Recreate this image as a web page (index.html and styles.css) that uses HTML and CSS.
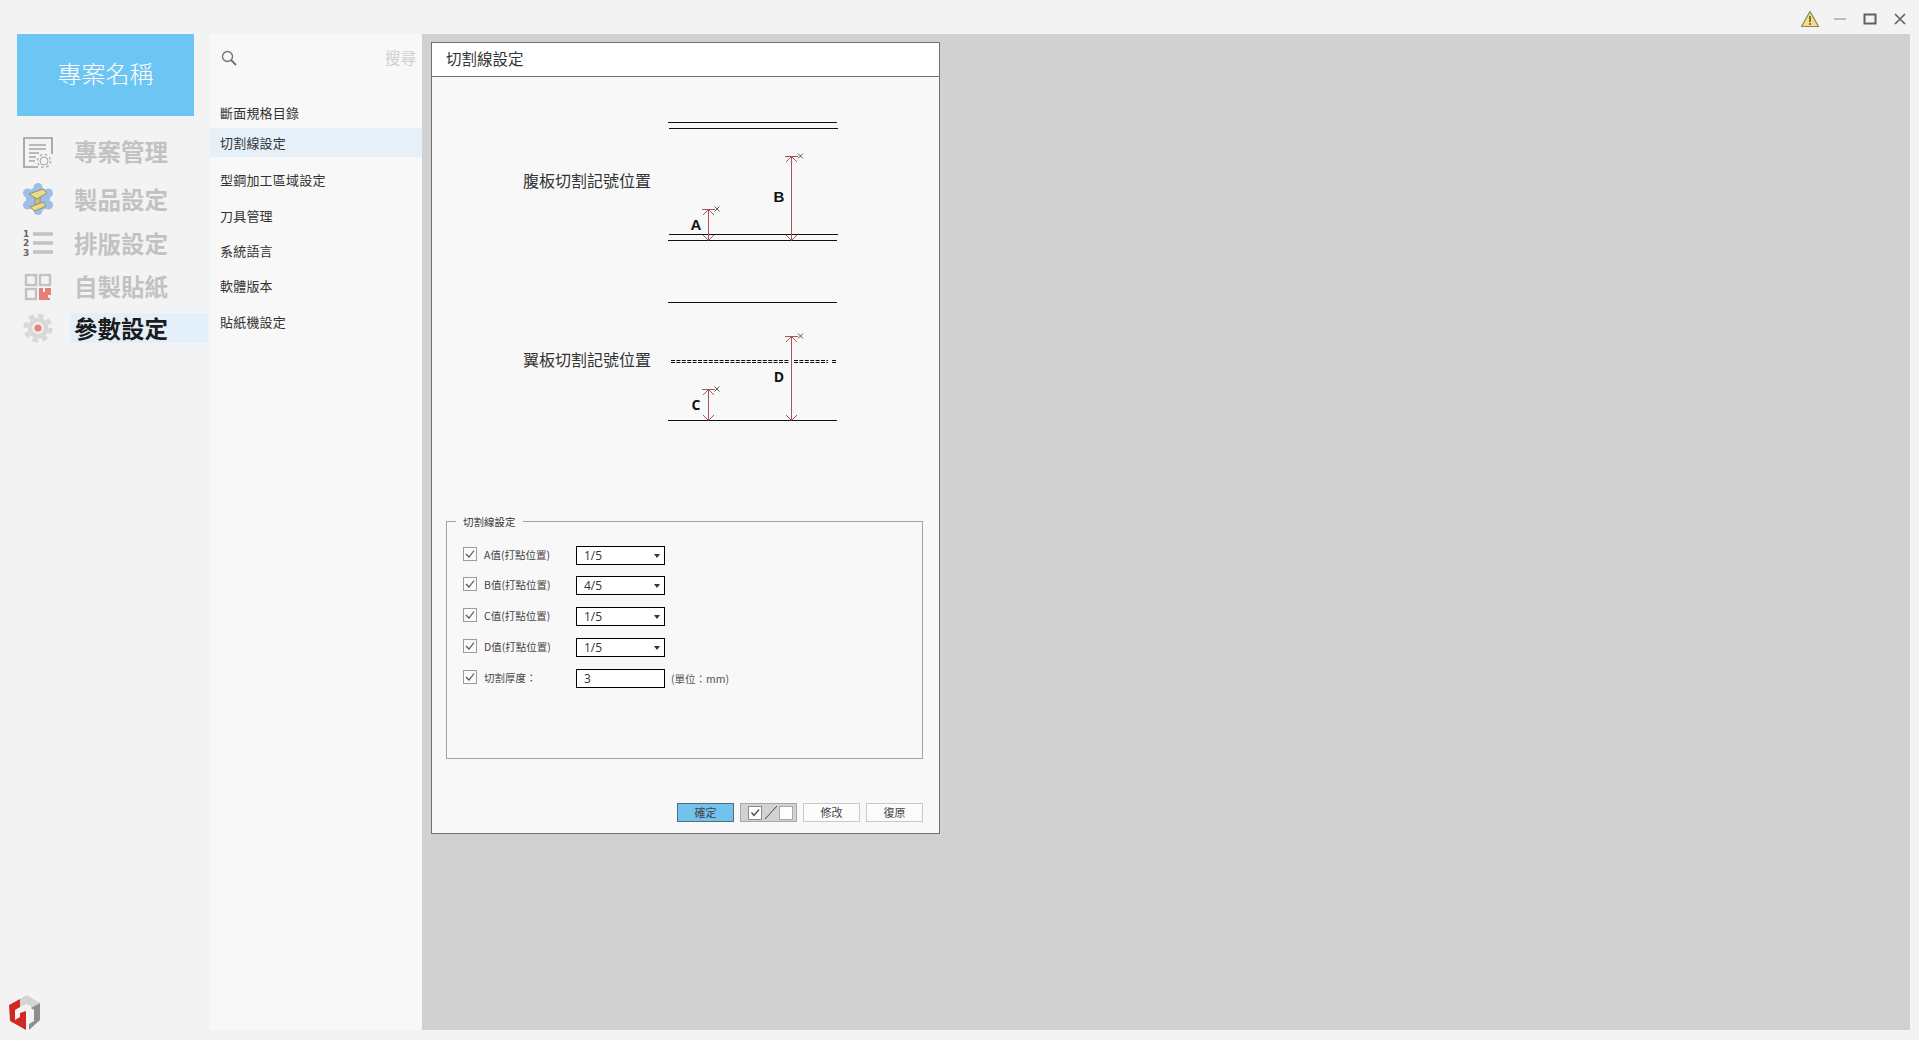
FILE: index.html
```html
<!DOCTYPE html>
<html>
<head>
    <title>切割線設定</title>
    <meta charset="UTF-8">
    <link rel="stylesheet" href="styles.css">
</head>
<body>
    <header class="title-bar">
        <svg class="warning-icon" width="20" height="18" viewBox="0 0 20 18">
            <path d="M10 1.5 L18.5 16.5 H1.5 Z" fill="#f5dc8c" stroke="#8a8358" stroke-width="1.2" stroke-linejoin="round"/>
            <path d="M10 6 V12" stroke="#7a6a30" stroke-width="1.8"/>
            <path d="M10 13 V15" stroke="#7a6a30" stroke-width="1.8"/>
        </svg>
        <div class="win-button"><svg width="14" height="14" viewBox="0 0 14 14"><path d="M1 7 H13" stroke="#adadad" stroke-width="1.5"/></svg></div>
        <div class="win-button"><svg width="14" height="14" viewBox="0 0 14 14"><rect x="1.5" y="2.5" width="11" height="9" fill="none" stroke="#606060" stroke-width="2"/></svg></div>
        <div class="win-button"><svg width="14" height="14" viewBox="0 0 14 14"><path d="M2 2 L12 12 M12 2 L2 12" stroke="#606060" stroke-width="1.6"/></svg></div>
    </header>
    <main>
        <div class="sidebar">
            <div class="project-name">專案名稱</div>
            <div class="menu-element menu-first">
                <svg class="menu-icon" width="30" height="32" viewBox="0 0 30 32">
                    <path d="M29 17 V1 H1 V30 H15" fill="none" stroke="#9a9a9a" stroke-width="1.6"/>
                    <path d="M6 8 H23 M6 12 H23 M6 16 H16 M6 20 H13 M6 24 H12" stroke="#a5a5a5" stroke-width="1.3"/>
                    <circle cx="21" cy="24" r="4" fill="none" stroke="#a5a5a5" stroke-width="1"/>
                    <circle cx="21" cy="24" r="6.5" fill="none" stroke="#b5b5b5" stroke-width="1.6" stroke-dasharray="2.5 2.6"/>
                </svg>
                <span class="menu-text-up">專案管理</span>
            </div>
            <div class="menu-element menu-second">
                <svg class="menu-icon" width="30" height="32" viewBox="0 0 30 32">
                    <g fill="#9dbfe6">
                        <circle cx="15" cy="4.5" r="4.5"/><circle cx="15" cy="27.5" r="4.5"/>
                        <circle cx="4.5" cy="10" r="4.5"/><circle cx="25.500" cy="10" r="4.5"/>
                        <circle cx="4.5" cy="22" r="4.5"/><circle cx="25.500" cy="22" r="4.5"/>
                        <circle cx="15" cy="16" r="12"/>
                    </g>
                    <path d="M12 14 L17 12 L17 21 L12 24 Z" fill="#cfc07a" stroke="#8f8a5c" stroke-width="0.8"/>
                    <path d="M6 11 L20 6 L24 10 L14 16 Z" fill="#ecd98c" stroke="#8f8a5c" stroke-width="0.9"/>
                    <path d="M7 24 L20 19 L23 23 L12 28 Z" fill="#ecd98c" stroke="#8f8a5c" stroke-width="0.9"/>
                </svg>
                <span>製品設定</span>
            </div>
            <div class="menu-element menu-third">
                <svg class="menu-icon" width="30" height="28" viewBox="0 0 30 28">
                    <text class="list-digit" x="0" y="8">1</text>
                    <text class="list-digit" x="0" y="17">2</text>
                    <text class="list-digit" x="0" y="27">3</text>
                    <path d="M10 5 H30 M10 14 H30 M10 23 H30" stroke="#c2c2c2" stroke-width="3.4"/>
                </svg>
                <span>排版設定</span>
            </div>
            <div class="menu-element menu-fourth">
                <svg class="menu-icon" width="30" height="28" viewBox="0 0 30 28">
                    <g fill="none" stroke="#c2c2c2" stroke-width="2.4">
                        <rect x="3" y="2" width="10" height="10"/>
                        <rect x="17" y="2" width="10" height="10"/>
                        <rect x="3" y="16" width="10" height="10"/>
                    </g>
                    <rect x="16" y="15" width="9" height="12" fill="#e47f7a"/>
                    <rect x="25" y="15" width="3" height="7" fill="#e47f7a"/>
                    <rect x="20" y="15" width="2" height="4" fill="#f3f3f3"/>
                    <rect x="25" y="25" width="2" height="2" fill="#999"/>
                </svg>
                <span class="menu-text-up-small">自製貼紙</span>
            </div>
            <div class="menu-element menu-fifth active-element">
                <svg class="menu-icon" width="30" height="30" viewBox="0 0 30 30">
                    <circle cx="15" cy="15" r="10.5" fill="#d8d8d8"/>
                    <circle cx="15" cy="15" r="12.500" fill="none" stroke="#d8d8d8" stroke-width="4" stroke-dasharray="5.5 4.3"/>
                    <circle cx="15" cy="15" r="6" fill="#f0f0f0"/>
                    <circle cx="15" cy="15" r="3.6" fill="#e8827c"/>
                </svg>
                <span>參數設定</span>
            </div>
            <svg class="app-logo" width="34" height="38" viewBox="0 0 34 38">
                <path d="M2 11 L13 5 L13 13 L8 16 L8 26 L13 23 L13 19 L19 17 L19 36 L3 27 Z" fill="#cf2a20"/>
                <path d="M13 5 L20 1 L33 9 L24 14 L24 12 L19 10 L13 13 Z" fill="#d4d4d4"/>
                <path d="M24 14 L33 9 L33 26 L22 36 L22 30 L27 27 L27 16 Z" fill="#8e8e8e"/>
            </svg>
        </div>

        <div class="sub-menu">
            <div class="search-box">
                <svg width="16" height="16" viewBox="0 0 16 16"><circle cx="6.500" cy="6.500" r="5" fill="none" stroke="#707070" stroke-width="1.300"/><path d="M10 10 L15 15" stroke="#707070" stroke-width="1.800"/></svg>
                <span class="search-text">搜尋</span>
            </div>
            <div class="sub-element sub-top">斷面規格目錄</div>
            <div class="sub-element sub-active">切割線設定</div>
            <div class="sub-list">
                <div class="sub-element">型鋼加工區域設定</div>
                <div class="sub-element">刀具管理</div>
                <div class="sub-element">系統語言</div>
                <div class="sub-element">軟體版本</div>
                <div class="sub-element">貼紙機設定</div>
            </div>
        </div>

        <div class="main-content">
            <div class="dialog">
                <div class="dialog-title">切割線設定</div>

                <div class="diagram-row diagram-first">
                    <div class="diagram-label">腹板切割記號位置</div>
                    <svg width="190" height="179" viewBox="660 93 190 179">
                        <g class="beam-line">
                            <path d="M668 122.500 H837"/>
                            <path d="M669 128.500 H838"/>
                            <path d="M669 234.500 H838"/>
                            <path d="M668 240.500 H837"/>
                        </g>
                        <g class="mark-line">
                            <path d="M708.500 209 V240 M702 209.500 H715 M703 215 L708.500 209.500 L714 215 M703 235 L708.500 240.500 L714 235"/>
                            <path d="M791.500 156 V240 M785 156.500 H798 M786 162 L791.500 156.500 L797 162 M786 235 L791.500 240.500 L797 235"/>
                        </g>
                        <path class="mark-cross" d="M714.500 206.500 L719.500 211.500 M719.500 206.500 L714.500 211.500"/>
                        <path class="mark-cross" d="M798 153.500 L803 158.500 M803 153.500 L798 158.500"/>
                        <text class="mark-letter" x="696" y="230">A</text>
                        <text class="mark-letter" x="779" y="202">B</text>
                    </svg>
                </div>
                <div class="diagram-row">
                    <div class="diagram-label">翼板切割記號位置</div>
                    <svg width="190" height="179" viewBox="660 272 190 179">
                        <g class="beam-line">
                            <path d="M668 302.500 H837"/>
                            <path d="M668 420.500 H837"/>
                        </g>
                        <path class="dash-line" d="M671 360.500 H789 M794 360.500 H828 M832 360.500 H836 M671 362.500 H789 M794 362.500 H828 M832 362.500 H836"/>
                        <g class="mark-line">
                            <path d="M708.500 389 V420 M702 389.500 H715 M703 395 L708.500 389.500 L714 395 M703 415 L708.500 420.500 L714 415"/>
                            <path d="M791.500 336 V420 M785 336.500 H798 M786 342 L791.500 336.500 L797 342 M786 415 L791.500 420.500 L797 415"/>
                        </g>
                        <path class="mark-cross" d="M714.500 386.500 L719.500 391.500 M719.500 386.500 L714.500 391.500"/>
                        <path class="mark-cross" d="M798 333.500 L803 338.500 M803 333.500 L798 338.500"/>
                        <text class="mark-letter mark-open" x="696" y="410">C</text>
                        <text class="mark-letter mark-open" x="779" y="382">D</text>
                    </svg>
                </div>

                <fieldset class="settings">
                    <legend>切割線設定</legend>
                    <div class="setting-row">
                        <span class="check"><svg width="14" height="14" viewBox="0 0 14 14"><path d="M3 7 L6 10 L11 3.500"/></svg></span>
                        <span class="setting-name">A值(打點位置)</span>
                        <div class="select">1/5</div>
                    </div>
                    <div class="setting-row">
                        <span class="check"><svg width="14" height="14" viewBox="0 0 14 14"><path d="M3 7 L6 10 L11 3.500"/></svg></span>
                        <span class="setting-name">B值(打點位置)</span>
                        <div class="select">4/5</div>
                    </div>
                    <div class="setting-row">
                        <span class="check"><svg width="14" height="14" viewBox="0 0 14 14"><path d="M3 7 L6 10 L11 3.500"/></svg></span>
                        <span class="setting-name">C值(打點位置)</span>
                        <div class="select">1/5</div>
                    </div>
                    <div class="setting-row">
                        <span class="check"><svg width="14" height="14" viewBox="0 0 14 14"><path d="M3 7 L6 10 L11 3.500"/></svg></span>
                        <span class="setting-name">D值(打點位置)</span>
                        <div class="select">1/5</div>
                    </div>
                    <div class="setting-row">
                        <span class="check"><svg width="14" height="14" viewBox="0 0 14 14"><path d="M3 7 L6 10 L11 3.500"/></svg></span>
                        <span class="setting-name">切割厚度：</span>
                        <input class="text-input" type="text" value="3" />
                        <span class="unit">(單位：mm)</span>
                    </div>
                </fieldset>

                <div class="button-row">
                    <button type="button" class="button button-primary">確定</button>
                    <button type="button" class="button button-toggle">
                        <svg width="55" height="17" viewBox="0 0 55 17">
                            <rect x="7.500" y="2.500" width="13" height="13" fill="#fff" stroke="#8a8a8a"/>
                            <path d="M10.500 8.500 L13 11.500 L18 5.500" fill="none" stroke="#444" stroke-width="1.200"/>
                            <path d="M24 15 L36 2" stroke="#444" stroke-width="1"/>
                            <rect x="38.500" y="2.500" width="13" height="13" fill="#fff" stroke="#a8a8a8"/>
                        </svg>
                    </button>
                    <button type="button" class="button">修改</button>
                    <button type="button" class="button">復原</button>
                </div>
            </div>
        </div>
    </main>
</body>
</html>
```

FILE: styles.css
```css
html {
    height: 100%;
}

body {
    margin: 0;
    height: 1040px;
    overflow: hidden;
    background-color: #f3f3f3;
    font-family: "Noto Sans CJK TC", "Open Sans", sans-serif;
    color: #333;
}

.title-bar {
    height: 34px;
    display: flex;
    flex-direction: row;
    justify-content: flex-end;
    align-items: center;
    padding-right: 4px;
    box-sizing: border-box;
}

.warning-icon {
    margin-right: 5px;
    margin-top: 3px;
}

.win-button {
    width: 30px;
    height: 14px;
    margin-top: 3px;
    display: flex;
    justify-content: center;
}

main {
    display: flex;
    flex-direction: row;
    height: 996px;
}

/* left column */
.sidebar {
    width: 210px;
    flex-shrink: 0;
    position: relative;
}

.project-name {
    width: 177px;
    height: 82px;
    margin-left: 17px;
    padding-bottom: 6px;
    box-sizing: border-box;
    background-color: #6cc5f2;
    color: #fff;
    font-size: 24px;
    font-weight: 300;
    display: flex;
    align-items: center;
    justify-content: center;
}

.menu-element {
    display: flex;
    align-items: center;
    height: 30px;
    padding-left: 23px;
    font-size: 23.5px;
    font-weight: 700;
    color: #c2c2c2;
}

.menu-element span {
    margin-left: 21px;
}

.menu-text-up {
    margin-bottom: 4px;
}

.menu-text-up-small {
    margin-bottom: 2px;
}

.menu-icon {
    flex-shrink: 0;
}

.menu-first {
    margin-top: 22px;
}

.menu-second {
    margin-top: 16px;
}

.menu-third {
    margin-top: 14px;
}

.menu-fourth {
    margin-top: 14px;
}

.menu-fifth {
    margin-top: 11px;
}

.active-element {
    color: #1c1c1c;
    background: linear-gradient(to right, transparent 70px, #e4f0f9 70px, #e4f0f9 208px, transparent 208px);
}

.list-digit {
    font-family: "DejaVu Sans", sans-serif;
    font-size: 9px;
    font-weight: 700;
    fill: #666;
}

.app-logo {
    position: absolute;
    left: 7px;
    bottom: -2px;
}

/* second column */
.sub-menu {
    width: 212px;
    flex-shrink: 0;
    height: 996px;
    background-color: #f8f8f8;
    font-size: 13px;
    color: #333;
}

.search-box {
    height: 48px;
    padding: 0 6px 0 11px;
    display: flex;
    justify-content: space-between;
    align-items: center;
}

.search-text {
    font-size: 15.500px;
    color: #cfcfcf;
    margin-bottom: 2px;
}

.sub-element {
    padding-left: 10px;
    padding-bottom: 2px;
    box-sizing: border-box;
    letter-spacing: 0.2px;
    white-space: nowrap;
    display: flex;
    align-items: center;
    height: 35.4px;
}

.sub-top {
    height: 30px;
    margin-top: 16px;
}

.sub-active {
    height: 29px;
    padding-bottom: 1px;
    background-color: #e5f0f8;
}

.sub-list {
    margin-top: 6px;
}

/* canvas */
.main-content {
    width: 1488px;
    height: 996px;
    background-color: #d1d1d1;
    padding: 8px 0 0 9px;
    box-sizing: border-box;
}

.dialog {
    width: 509px;
    height: 792px;
    box-sizing: border-box;
    border: 1px solid #707070;
    background-color: #f8f8f8;
}

.dialog-title {
    height: 34px;
    padding-left: 14px;
    padding-bottom: 4px;
    box-sizing: border-box;
    background-color: #fff;
    border-bottom: 1px solid #707070;
    font-size: 15.500px;
    display: flex;
    align-items: center;
}

.diagram-row {
    display: flex;
    flex-direction: row;
    align-items: center;
    height: 179px;
    padding-left: 91px;
}

.diagram-first {
    margin-top: 16px;
}

.diagram-label {
    width: 128px;
    margin-right: 9px;
    margin-bottom: 5px;
    font-size: 16px;
    white-space: nowrap;
}

.beam-line path {
    fill: none;
    stroke: #111;
    stroke-width: 1;
}

.dash-line {
    fill: none;
    stroke: #111;
    stroke-width: 1;
    stroke-dasharray: 4 1.400;
}

.mark-line path {
    fill: none;
    stroke: #a5555c;
    stroke-width: 1;
}

.mark-cross {
    fill: none;
    stroke: #333;
    stroke-width: 0.800;
}

.mark-letter {
    font-family: "Liberation Sans", sans-serif;
    font-size: 15px;
    font-weight: 700;
    text-anchor: middle;
    fill: #111;
}

.mark-open {
    font-family: "Open Sans", sans-serif;
    font-size: 14px;
}

.settings {
    box-sizing: border-box;
    height: 245px;
    margin: 63px 16px 0 14px;
    padding: 17px 0 0 16px;
    border: 1px solid #a3a3a3;
    font-size: 10.500px;
}

.settings legend {
    padding: 0 7px;
    margin-left: -7px;
    font-size: 10.500px;
    line-height: 15px;
}

.setting-row {
    display: flex;
    flex-direction: row;
    align-items: center;
    height: 19px;
    margin-bottom: 12px;
}

.setting-row:first-of-type {
    margin-bottom: 11px;
}

.check {
    width: 14px;
    height: 14px;
    box-sizing: border-box;
    border: 1px solid #9c9c9c;
    background-color: #fafafa;
    margin-top: -3px;
    display: flex;
}

.check svg {
    margin: -1px;
    flex-shrink: 0;
}

.check path {
    fill: none;
    stroke: #555;
    stroke-width: 1.200;
}

.setting-name {
    width: 92px;
    margin-left: 7px;
    margin-top: -3px;
    white-space: nowrap;
    color: #444;
}

.select,
.text-input {
    width: 89px;
    height: 19px;
    box-sizing: border-box;
    border: 1px solid #000;
    background-color: #fff;
    padding: 0 0 0 7px;
    font-family: "Open Sans", sans-serif;
    font-size: 12px;
    line-height: 18px;
    color: #333;
    position: relative;
}

.select::after {
    content: "";
    position: absolute;
    right: 4px;
    top: 7px;
    border-left: 3.500px solid transparent;
    border-right: 3.500px solid transparent;
    border-top: 4px solid #333;
}

.unit {
    margin-left: 6px;
    font-size: 10.500px;
    white-space: nowrap;
    color: #555;
}

.button-row {
    display: flex;
    flex-direction: row;
    justify-content: flex-end;
    gap: 6px;
    margin-top: 44px;
    padding-right: 16px;
}

.button {
    width: 57px;
    height: 19px;
    box-sizing: border-box;
    padding: 0;
    border: 1px solid #c9c9c9;
    background-color: #fbfbfb;
    font-family: "Noto Sans CJK TC", sans-serif;
    font-size: 11px;
    line-height: 17px;
    color: #444;
}

.button-primary {
    background-color: #72c2ee;
    border-color: #5a6a78;
}

.button-toggle {
    background-color: #d2d2d2;
    border-color: #a8a8a8;
    display: flex;
}
```
